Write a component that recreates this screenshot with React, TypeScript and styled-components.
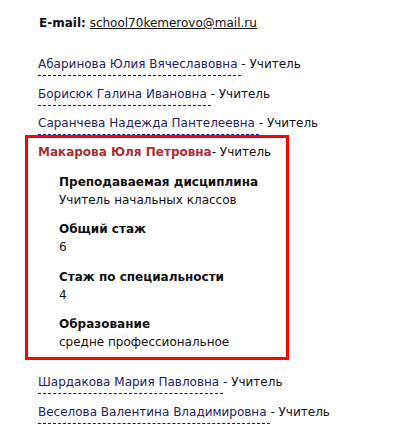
import React from "react";
import styled, { createGlobalStyle } from "styled-components";

const Global = createGlobalStyle`
  html, body { margin: 0; padding: 0; background: #fff; }
  body { font-family: "DejaVu Sans", Verdana, sans-serif; font-size: 12px; color: #111; }
`;

const Page = styled.div`
  display: flex;
  flex-direction: column;
  box-sizing: border-box;
  min-height: 100vh;
  padding: 14px 0 12px 38px;
  width: 396px;
`;

const Line = styled.div<{ $mt?: number }>`
  line-height: 18px;
  white-space: nowrap;
  margin-top: ${(p) => p.$mt ?? 0}px;
`;

const Label = styled.b`
  font-weight: bold;
  margin-left: 1px;
`;

const Mail = styled.a`
  color: #111;
  text-decoration: underline;
`;

const Name = styled.a`
  color: #23235e;
  text-decoration: none;
  border-bottom: 1px dashed #1010a0;
  padding-bottom: 4px;
`;

const Card = styled.div`
  margin: 3px 0 0 -13px;
  width: 264px;
  box-sizing: border-box;
  border: 3px solid #ff0000;
  padding: 5px 0 6px 10px;
  display: flex;
  flex-direction: column;
  gap: 11.5px;
`;

const ActiveName = styled.span`
  color: #a23234;
  font-weight: bold;
`;

const Field = styled.div`
  padding-left: 21px;
  line-height: 18px;
`;

const FieldTitle = styled.div`
  font-weight: bold;
`;

const FieldValue = styled.div``;

const before = [
  "Абаринова Юлия Вячеславовна",
  "Борисюк Галина Ивановна",
  "Саранчева Надежда Пантелеевна",
];
const after = ["Шардакова Мария Павловна", "Веселова Валентина Владимировна"];

const fields = [
  ["Преподаваемая дисциплина", "Учитель начальных классов"],
  ["Общий стаж", "6"],
  ["Стаж по специальности", "4"],
  ["Образование", "средне профессиональное"],
];

export default function App() {
  return (
    <>
      <Global />
      <Page>
        <Line>
          <Label>E-mail:</Label> <Mail href="#">school70kemerovo@mail.ru</Mail>
        </Line>
        {before.map((n, i) => (
          <Line key={n} $mt={i === 0 ? 23 : i === 1 ? 12 : 11}>
            <Name href="#">{n} </Name>- Учитель
          </Line>
        ))}
        <Card>
          <Line>
            <ActiveName>Макарова Юля Петровна</ActiveName>- Учитель
          </Line>
          {fields.map(([t, v]) => (
            <Field key={t}>
              <FieldTitle>{t}</FieldTitle>
              <FieldValue>{v}</FieldValue>
            </Field>
          ))}
        </Card>
        {after.map((n, i) => (
          <Line key={n} $mt={i === 0 ? 13 : 12}>
            <Name href="#">{n} </Name>- Учитель
          </Line>
        ))}
      </Page>
    </>
  );
}
